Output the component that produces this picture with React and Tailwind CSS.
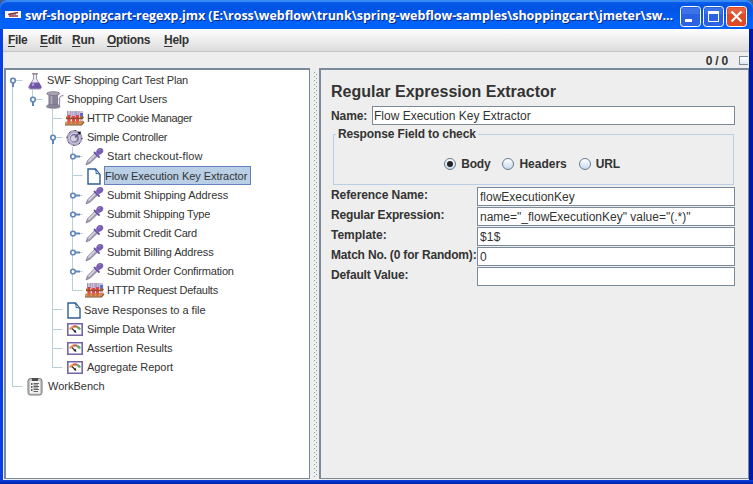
import React from "react";

const FLASK = (
  <svg width="16" height="18" viewBox="0 0 16 18">
    <path d="M6 2h4M6.500 2v5L2 14.200c-.8 1.500 0 2.800 1.500 2.800h9c1.500 0 2.300-1.300 1.500-2.800L9.500 7V2" fill="#ece8f5" stroke="#9a95a8" strokeWidth="1" />
    <path d="M4 10.500h8l2 3.700c.6 1.400 0 2.500-1.300 2.500H3.600c-1.300 0-1.900-1.100-1.300-2.500z" fill="#6f55a8" />
    <path d="M4.500 13.500l1.200-2.300h2l-1.500 3z" fill="#b9a6dd" />
    <path d="M5 1h6v1.500H5z" fill="#a08c98" />
  </svg>
);

const SPOOL = (
  <svg width="19" height="18" viewBox="0 0 19 18">
    <path d="M13 9c1-5 2.500-4 4.500-4.500M13.500 8v4c0 2-.5 4-2 4" fill="none" stroke="#9b93ac" strokeWidth="1.300" />
    <path d="M2.500 3h9.500v11H2.500z" fill="#8d879b" />
    <path d="M4.500 4h2v10h-2z" fill="#bbb5c7" />
    <path d="M2.500 6H12M2.500 8H12M2.500 10H12M2.500 12H12" stroke="#7b7489" strokeWidth=".5" />
    <ellipse cx="7.200" cy="2.600" rx="6.500" ry="1.900" fill="#aaa4b5" stroke="#756f81" strokeWidth=".8" />
    <path d="M1 14.500c1-1.500 11-1.500 12.500 0l.5 1.500c-2 1.800-11.500 1.800-13.500 0z" fill="#8b8597" stroke="#6f697b" strokeWidth=".6" />
  </svg>
);

const TUBES = (
  <svg width="20" height="17" viewBox="0 0 20 17">
    <path d="M4 1v13M8.500 1v13M12.500 1v13M16.500 1v12" stroke="#cdbfd9" strokeWidth="3.400" />
    <path d="M4 5v9M8.500 6v8M12.500 5v9" stroke="#dc3b45" strokeWidth="2.800" />
    <path d="M16.500 3v6" stroke="#5c66cc" strokeWidth="2.800" />
    <path d="M2.500 1v5M5.700 1v5M7 1v5M10.200 1v5M11.200 1v5M14 1v5" stroke="#8677a8" strokeWidth=".7" />
    <path d="M1 7.500h2M6 7.500h1M10 7.500h1M14.500 7.500H18" stroke="#b0682c" strokeWidth="2" />
    <path d="M0 12l3-1h16l-2.500 3H0z" fill="#c98340" opacity=".85" />
    <path d="M1 8.700h15.500L18.500 7M0 14.800h16.500l2.500-3" fill="none" stroke="#8a4f1c" strokeWidth="1.300" />
    <path d="M4 9.500v3M8.500 9.500v3M12.500 9.500v3" stroke="#e8504e" strokeWidth="1.600" />
  </svg>
);

const CONTROLLER = (
  <svg width="18" height="18" viewBox="0 0 18 18">
    <circle cx="8.500" cy="9" r="7.500" fill="#b3abc8" stroke="#8f87a5" strokeWidth=".8" />
    <circle cx="8.500" cy="9" r="7.500" fill="none" stroke="#2a2338" strokeWidth="1" strokeDasharray="1.200 4.700" />
    <circle cx="8.500" cy="9.300" r="5" fill="#8279a0" stroke="#d9d4e6" strokeWidth="1" />
    <circle cx="7.800" cy="9.600" r="3" fill="#d7d2e2" />
    <path d="M9 8.500l4-4" stroke="#5b5078" strokeWidth="1.300" />
    <path d="M11.500 3l3.500-.6-1 3.400z" fill="#17121f" />
  </svg>
);

const DROPPER = (
  <svg width="19" height="19" viewBox="0 0 19 19">
    <path d="M1 18l1.500-4.200L10 6.300l2.700 2.600L5 16.200z" fill="#a49cb4" stroke="#857e96" strokeWidth=".8" />
    <path d="M3.500 14.500l7-7" stroke="#e0dbea" strokeWidth="1.400" />
    <path d="M9.500 5.500l4.500 4.500" stroke="#6b51a3" strokeWidth="1.800" strokeLinecap="round" />
    <path d="M11 5.500c.2-3 2.500-5 5-4.500 2.500.7 3 3.300 1.500 5-1.200 1.400-2.600 1.200-3.800 2.300z" fill="#7a5eb3" />
    <path d="M13.500 3.500l2-1" stroke="#a08bd0" strokeWidth="1" />
  </svg>
);

const DOC = (
  <svg width="14" height="17" viewBox="0 0 14 17">
    <path d="M1 1h7.500L13 6.500V16H1z" fill="#fdfeff" stroke="#2f5f93" strokeWidth="1.400" />
    <path d="M7.500 1c1.500 1.500 1.800 3 1.500 4.600 1.500-.2 2.900.1 4 1" fill="#dce9f5" stroke="#2f5f93" strokeWidth="1" />
  </svg>
);

const GAUGE = (
  <svg width="16" height="13" viewBox="0 0 16 13">
    <path d="M.8.8h14.400v11.400H.8z" fill="#fff" stroke="#7565a6" strokeWidth="1.600" />
    <path d="M3 6.500Q4 4.300 6 3.800" fill="none" stroke="#e39a4d" strokeWidth="2.400" />
    <path d="M6 3.800q2-.7 4 0" fill="none" stroke="#d8564a" strokeWidth="2.200" />
    <path d="M10 3.800Q12 4.500 13 6.500" fill="none" stroke="#5ba765" strokeWidth="2.400" />
    <path d="M5 5.500l3.500 3.500" stroke="#2c2c2c" strokeWidth="1.100" />
    <path d="M6.500 8.700l2.300-1.700.5 3z" fill="#222" />
  </svg>
);

const CLIPBOARD = (
  <svg width="16" height="19" viewBox="0 0 16 19">
    <rect x="1" y="1.500" width="14" height="16.500" rx="2.500" fill="#c6c6c6" stroke="#777" />
    <rect x="3" y="4" width="10" height="12.500" fill="#f2f2f2" />
    <path d="M5 1h6v3H5z" fill="#4d4d4d" />
    <path d="M4 7h1.500M4 10h1.500M4 13h1.500" stroke="#333" strokeWidth="1.500" />
    <path d="M6.500 6.500H12M6.500 8H11M6.500 9.500H12M6.500 11H11M6.500 12.500H12M6.500 14.500H11" stroke="#555" strokeWidth=".9" />
  </svg>
);

const ICONS = {
  flask: [FLASK, "w-[21px] pl-px"],
  spool: [SPOOL, "w-[21px]"],
  tubes: [TUBES, "-ml-px w-[22px]"],
  controller: [CONTROLLER, "w-[21px]"],
  dropper: [DROPPER, "-ml-px w-[22px]"],
  doc: [DOC, "w-[18px] pl-px"],
  gauge: [GAUGE, "w-[21px] pl-px"],
  clipboard: [CLIPBOARD, "w-[22px] pl-px"],
};

// Each guide character draws one 20px column: | line, T branch, L last branch,
// O expanded node, o last expanded node, C collapsed node, S first root node.
const ROWS = [
  ["S", "flask", "SWF Shopping Cart Test Plan", "tracking-[-0.18px]"],
  ["|o", "spool", "Shopping Cart Users", "tracking-[-0.1px]"],
  ["| T", "tubes", "HTTP Cookie Manager", "tracking-[-0.38px]"],
  ["| O", "controller", "Simple Controller", "tracking-[-0.24px]"],
  ["| |C", "dropper", "Start checkout-flow", "tracking-[0.1px]"],
  ["| |T", "doc", "Flow Execution Key Extractor", "tracking-[-0.05px]"],
  ["| |C", "dropper", "Submit Shipping Address", "tracking-[-0.08px]"],
  ["| |C", "dropper", "Submit Shipping Type", "tracking-[-0.18px]"],
  ["| |C", "dropper", "Submit Credit Card", "tracking-[-0.2px]"],
  ["| |C", "dropper", "Submit Billing Address", "tracking-[-0.13px]"],
  ["| |C", "dropper", "Submit Order Confirmation", "tracking-[-0.16px]"],
  ["| |L", "tubes", "HTTP Request Defaults", "tracking-[-0.24px]"],
  ["| T", "doc", "Save Responses to a file", "tracking-normal"],
  ["| T", "gauge", "Simple Data Writer", "tracking-[-0.2px]"],
  ["| T", "gauge", "Assertion Results", "tracking-normal"],
  ["| L", "gauge", "Aggregate Report", "tracking-[-0.05px]"],
  ["L", "clipboard", "WorkBench", "tracking-normal"],
];

function Guide({ kind }) {
  const down = "|TOCS".includes(kind);
  const up = "|TOoCL".includes(kind);
  const node = "OoCS".includes(kind);
  return (
    <svg width="20" height="20" viewBox="0 0 20 20" className="shrink-0">
      {up && <path d="M6.500 0v10" stroke="#b8cfd8" />}
      {down && <path d="M6.500 9v11" stroke="#b8cfd8" />}
      {kind !== "|" && kind !== " " && <path d="M6.500 9.500h10" stroke="#b8cfd8" />}
      {node && (
        <g>
          {kind === "C" ? (
            <path d="M9 9.500h5" stroke="#5f86b8" strokeWidth="2" />
          ) : (
            <path d="M7 11v5" stroke="#5f86b8" strokeWidth="2" />
          )}
          <circle cx="7" cy="9.500" r="2.300" fill="#fff" stroke="#5f86b8" strokeWidth="1.600" />
        </g>
      )}
    </svg>
  );
}

function TreeRow({ row }) {
  const [guides, icon, text, tracking] = row;
  const [glyph, box] = ICONS[icon];
  const selected = text === "Flow Execution Key Extractor";
  return (
    <div className={"flex items-center overflow-hidden " + (icon === "doc" ? "h-5" : "h-[19px]")}>
      {guides.split("").map((k, i) => (
        <Guide key={i} kind={k} />
      ))}
      <div className={"flex shrink-0 items-center " + box}>{glyph}</div>
      <span
        className={
          "h-[19px] whitespace-nowrap text-[11px] text-[#333] " +
          tracking +
          (selected ? " mb-px w-[147px] border border-[#6382bf] bg-[#b8cfe5] leading-[18px]" : " leading-[19px]")
        }
      >
        {text}
      </span>
    </div>
  );
}

function Radio({ checked, label, tracking }) {
  return (
    <div className="flex items-center gap-[5px]">
      <span className="flex size-3 items-center justify-center rounded-full border border-[#6a7a89] bg-linear-to-b from-white to-[#c5daee]">
        {checked && <span className="size-1.5 rounded-full bg-[#222]" />}
      </span>
      <span className={tracking}>{label}</span>
    </div>
  );
}

function Field({ label, value, tracking = "tracking-normal", labelTracking = "tracking-normal" }) {
  return (
    <div className="flex h-5">
      <span className={"w-[146px] shrink-0 whitespace-nowrap leading-[17px] " + labelTracking}>{label}</span>
      <div className={"h-[19px] flex-1 border border-[#7a8a99] bg-white pl-[2px] font-normal leading-[19px] " + tracking}>{value}</div>
    </div>
  );
}

function MenuItem({ text, width }) {
  return (
    <div className={"tracking-[-0.3px] " + width}>
      <span className="underline underline-offset-2">{text[0]}</span>
      {text.slice(1)}
    </div>
  );
}

export default function App() {
  return (
    <div className="flex h-[484px] w-[753px] flex-col overflow-hidden bg-[#4a5a88] font-['Liberation_Sans',Arial,sans-serif] text-xs text-[#333]">
      <div className="flex min-h-0 flex-1 flex-col rounded-t-[7px] bg-linear-to-r from-[#0840e4] from-50% to-[#0019a8] to-50%">
        <div className="flex h-[29px] shrink-0 items-center rounded-t-[7px] bg-linear-to-b from-[#0a5be8] from-0% via-[#0054e3] via-30% to-[#0062fb] to-80% pl-[5px] shadow-[inset_0_2px_1px_#3a8cf5]">
          <svg width="16" height="8" viewBox="0 0 16 8" className="mt-px shrink-0">
            <path d="M0 0h16v7H0z" fill="#fff" />
            <path d="M3 3.500L13 1.500M4 5h9" stroke="#a32b3c" strokeWidth="1.300" />
            <path d="M5 3h6" stroke="#444" />
          </svg>
          <span className="ml-1 mt-[3px] w-[655px] shrink-0 whitespace-nowrap font-['Open_Sans','Noto_Sans',sans-serif] text-[12.500px] font-bold tracking-[-0.05px] text-white [text-shadow:1px_1px_#0a2a8c]">
            {"swf-shoppingcart-regexp.jmx (E:\\ross\\webflow\\trunk\\spring-webflow-samples\\shoppingcart\\jmeter\\sw..."}
          </span>
          <div className="mt-[3px] flex gap-[2px]">
            <svg width="21" height="21" viewBox="0 0 21 21">
              <rect x=".5" y=".5" width="20" height="20" rx="3" fill="#2b62e3" stroke="#fff" />
              <path d="M2 2h17v6H2z" fill="#5c8cf0" opacity=".4" />
              <path d="M5 14.500h7" stroke="#fff" strokeWidth="3" />
            </svg>
            <svg width="21" height="21" viewBox="0 0 21 21">
              <rect x=".5" y=".5" width="20" height="20" rx="3" fill="#2b62e3" stroke="#fff" />
              <path d="M2 2h17v6H2z" fill="#5c8cf0" opacity=".4" />
              <path d="M5.500 5.500h10v10h-10z" fill="none" stroke="#fff" />
              <path d="M5 6.500h11" stroke="#fff" strokeWidth="3" />
            </svg>
            <svg width="21" height="21" viewBox="0 0 21 21">
              <rect x=".5" y=".5" width="20" height="20" rx="3" fill="#dc4a26" stroke="#fff" />
              <path d="M2 2h17v6H2z" fill="#f08868" opacity=".4" />
              <path d="M5.500 5.500l10 10M15.500 5.500l-10 10" stroke="#fff" strokeWidth="2.200" />
            </svg>
          </div>
        </div>

        <div className="mr-1 ml-[3px] flex min-h-0 flex-1 flex-col bg-[#eee] pb-px">
          <div className="flex h-[23px] shrink-0 items-center border-b border-[#c4c4c4] bg-linear-to-b from-white to-[#dcdcdc] pl-[5px] font-bold">
            <MenuItem text="File" width="w-8" />
            <MenuItem text="Edit" width="w-8" />
            <MenuItem text="Run" width="w-[35px]" />
            <MenuItem text="Options" width="w-[57px]" />
            <MenuItem text="Help" width="w-10" />
          </div>
          <div className="flex h-4 shrink-0 items-center justify-end font-bold">
            <span className="mr-[11px] mt-px tracking-[-0.2px]">0 / 0</span>
            <span className="h-[9px] w-[9px] border border-r-0 border-[#7a8a99] bg-linear-to-b from-white to-[#dce8f4]" />
            <span className="w-px" />
          </div>

          <div className="flex min-h-0 flex-1 pl-px">
            <div className="flex w-[306px] shrink-0 flex-col border-2 border-r border-b border-[#7a8a99] bg-white pt-px">
              {ROWS.map((row) => (
                <TreeRow key={row[2]} row={row} />
              ))}
            </div>
            <svg className="mt-1 ml-1 h-[405px] w-1 shrink-0">
              <defs>
                <pattern id="grip" width="4" height="4" patternUnits="userSpaceOnUse">
                  <path d="M0 0h1v1H0zM2 2h1v1H2z" fill="#8c97a6" />
                </pattern>
              </defs>
              <rect width="4" height="405" fill="url(#grip)" />
            </svg>
            <div className="ml-px flex min-w-0 flex-1 flex-col border-2 border-r border-b border-[#7a8a99] pl-[10px] pr-[13px] font-bold">
              <h1 className="mt-[9px] h-[26px] whitespace-nowrap text-base leading-[26px]">Regular Expression Extractor</h1>
              <div className="mt-px flex h-5">
                <span className="w-[41px] shrink-0 leading-[21px] tracking-[-0.1px]">Name:</span>
                <div className="h-[19px] flex-1 border border-[#7a8a99] bg-white pl-px font-normal leading-[19px]">Flow Execution Key Extractor</div>
              </div>
              <fieldset className="mr-px ml-[2px] mt-px h-[58px] border border-[#b8cfe5]">
                <legend className="ml-[2px] h-[14px] px-[2px] leading-[14px] tracking-[-0.13px]">Response Field to check</legend>
                <div className="mt-[15px] flex justify-center gap-3 pr-[3px]">
                  <Radio checked label="Body" tracking="tracking-[-0.2px]" />
                  <Radio label="Headers" tracking="tracking-normal" />
                  <Radio label="URL" tracking="tracking-[-0.2px]" />
                </div>
              </fieldset>
              <div className="mt-[2px]">
                <Field label="Reference Name:" value="flowExecutionKey" labelTracking="tracking-[-0.08px]" />
                <Field label="Regular Expression:" value={'name="_flowExecutionKey" value="(.*)"'} labelTracking="tracking-[-0.18px]" />
                <Field label="Template:" value="$1$" tracking="tracking-[0.2px]" />
                <Field label="Match No. (0 for Random):" value="0" labelTracking="tracking-[-0.18px]" />
                <Field label="Default Value:" value="" labelTracking="tracking-[-0.15px]" />
              </div>
            </div>
          </div>
        </div>
        <div className="h-[4px] shrink-0 bg-linear-to-b from-[#0a3fe0] to-[#001ea0]" />
      </div>
    </div>
  );
}
